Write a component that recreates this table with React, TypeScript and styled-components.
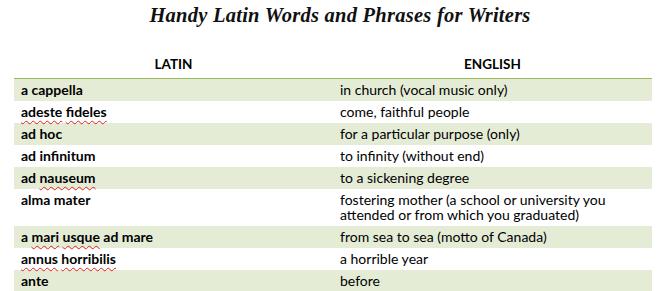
import styled, { createGlobalStyle } from 'styled-components'

const GlobalStyle = createGlobalStyle`
  body {
    margin: 0;
    background: #ffffff;
  }
`

const Page = styled.div`
  width: 668px;
  height: 291px;
  overflow: hidden;
  box-sizing: border-box;
  padding: 0 16px 0 14px;
  font-family: Lato, 'Liberation Sans', sans-serif;
  color: #000;
`

const Title = styled.h1`
  margin: 0;
  height: 40px;
  box-sizing: border-box;
  padding: 4px 0 0 14px;
  text-align: center;
  font-family: 'Liberation Serif', serif;
  font-style: italic;
  font-weight: 700;
  font-size: 20.5px;
  letter-spacing: 0.25px;
  line-height: 22px;
  color: #111;
`

const Table = styled.table`
  width: 638px;
  border-collapse: collapse;
  table-layout: fixed;
  font-size: 14px;
`

const HeadCell = styled.th`
  height: 32px;
  padding: 0 0 6px;
  vertical-align: bottom;
  text-align: center;
  font-size: 13.5px;
  font-weight: 700;
  line-height: 15px;
  border-bottom: 1px solid #9bbb59;
`

const Row = styled.tr<{ $shaded: boolean }>`
  background: ${(p) => (p.$shaded ? '#e5ecd6' : '#ffffff')};
`

const Cell = styled.td<{ $bold?: boolean }>`
  padding: 3px 7px 4px;
  vertical-align: top;
  line-height: 15px;
  font-weight: ${(p) => (p.$bold ? 700 : 400)};
`

const Typo = styled.span`
  text-decoration: underline wavy #e02020;
  text-decoration-thickness: 1px;
  text-underline-offset: 3px;
  text-decoration-skip-ink: none;
`

type Entry = { latin: React.ReactNode; english: React.ReactNode }

const entries: Entry[] = [
  { latin: 'a cappella', english: 'in church (vocal music only)' },
  {
    latin: (
      <>
        <Typo>adeste</Typo> <Typo>fideles</Typo>
      </>
    ),
    english: 'come, faithful people',
  },
  { latin: 'ad hoc', english: 'for a particular purpose (only)' },
  { latin: 'ad infinitum', english: 'to infinity (without end)' },
  {
    latin: (
      <>
        ad <Typo>nauseum</Typo>
      </>
    ),
    english: 'to a sickening degree',
  },
  {
    latin: 'alma mater',
    english: (
      <>
        fostering mother (a school or university you
        <br />
        attended or from which you graduated)
      </>
    ),
  },
  {
    latin: (
      <>
        a <Typo>mari</Typo> <Typo>usque</Typo> ad mare
      </>
    ),
    english: 'from sea to sea (motto of Canada)',
  },
  {
    latin: (
      <>
        <Typo>annus</Typo> <Typo>horribilis</Typo>
      </>
    ),
    english: 'a horrible year',
  },
  { latin: 'ante', english: 'before' },
]

const App = () => {
  return (
    <>
      <GlobalStyle />
      <Page>
        <Title>Handy Latin Words and Phrases for Writers</Title>
        <Table>
          <colgroup>
            <col style={{ width: 319 }} />
            <col style={{ width: 319 }} />
          </colgroup>
          <thead>
            <tr>
              <HeadCell>LATIN</HeadCell>
              <HeadCell>ENGLISH</HeadCell>
            </tr>
          </thead>
          <tbody>
            {entries.map((e, i) => (
              <Row key={i} $shaded={i % 2 === 0}>
                <Cell $bold>{e.latin}</Cell>
                <Cell>{e.english}</Cell>
              </Row>
            ))}
          </tbody>
        </Table>
      </Page>
    </>
  )
}

export default App
